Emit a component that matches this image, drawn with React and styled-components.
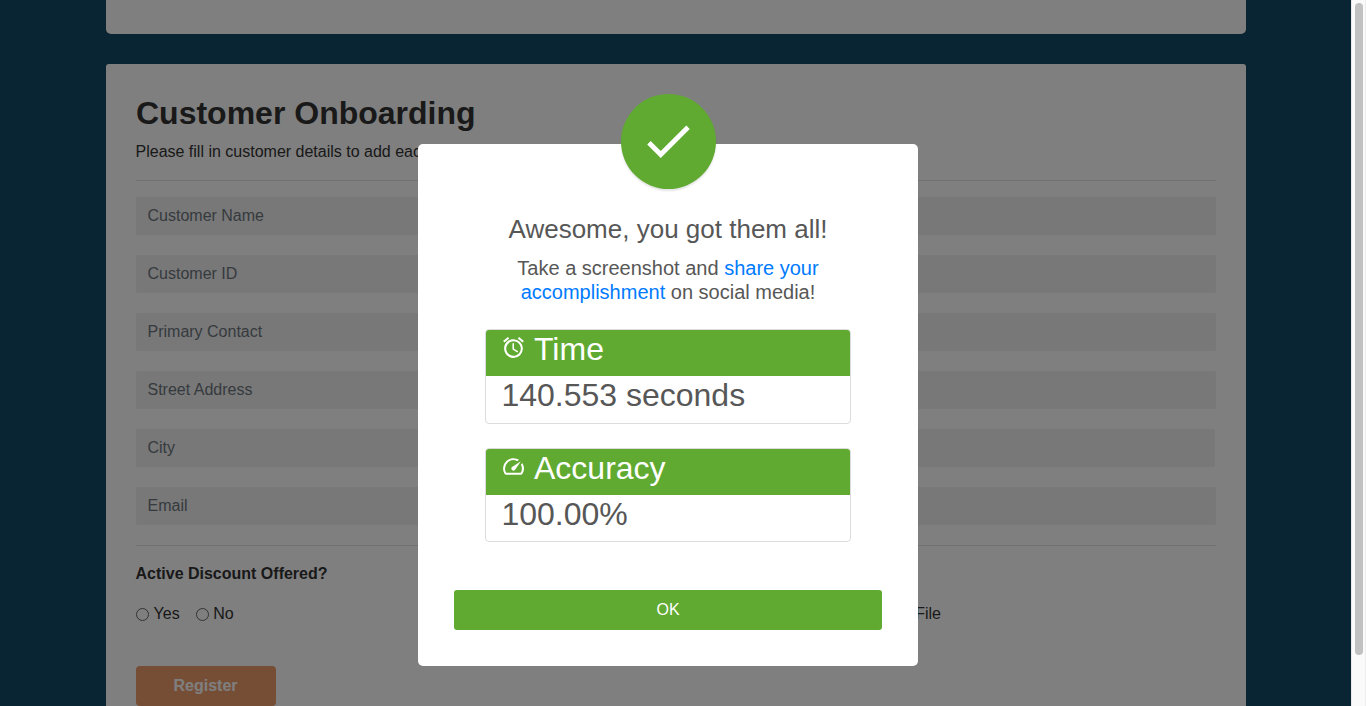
import React from "react";
import styled, { createGlobalStyle } from "styled-components";
import { MdCheck, MdAlarm, MdSpeed } from "react-icons/md";

const GlobalStyle = createGlobalStyle`
  * { box-sizing: border-box; }
  body {
    margin: 0;
    overflow: hidden;
    font-family: "Liberation Sans", Arial, sans-serif;
    font-size: 16px;
    line-height: 24px;
    color: #333;
  }
`;

const Page = styled.div`
  display: flex;
  height: 706px;
  overflow: hidden;
  background: #124a66;
`;

const Content = styled.main`
  flex: 1;
  display: flex;
  flex-direction: column;
  align-items: center;
  gap: 30px;
`;

const Card = styled.section`
  width: 1140px;
  flex: none;
  margin-left: 1px;
  background: #fff;
  border-radius: ${(p) => (p.$end ? "0 0 5px 5px" : "3px")};
  height: ${(p) => p.$height}px;
  padding: ${(p) => (p.$end ? 0 : "30px")};
`;

const Heading = styled.h1`
  margin: 0 0 8px;
  font-size: 32px;
  line-height: 38.4px;
  font-weight: 700;
`;

const Lead = styled.p`
  margin: 0 0 16px;
  white-space: nowrap;
  text-indent: -0.5px;
`;

const Rule = styled.hr`
  height: 1px;
  margin: 0 0 16px;
  border: 0;
  background: #e3e3e3;
`;

const Fields = styled.div`
  display: grid;
  gap: 20px;
  margin-bottom: 20px;
`;

const Field = styled.input`
  width: ${(p) => (p.$short ? "1079px" : "100%")};
  height: 38px;
  padding: 6px 11.5px;
  border: 0;
  border-radius: 2px;
  background: #f0f0f0;
  font: inherit;
  &::placeholder { color: #6c757d; opacity: 1; }
`;

const Options = styled.div`
  display: grid;
  grid-template-columns: 702px 1fr;
  height: 104px;
`;

const OptionTitle = styled.div`
  margin-bottom: 16px;
  font-weight: 700;
  text-indent: -0.5px;
`;

const Choices = styled.div`
  display: flex;
  gap: 16px;
`;

const Choice = styled.label`
  display: flex;
  align-items: center;
  gap: 4.6px;
`;

const Ring = styled.span`
  width: 13px;
  height: 13px;
  margin-top: 1px;
  border: 1px solid #666;
  border-radius: ${(p) => (p.$square ? "2px" : "50%")};
`;

const Register = styled.button`
  width: 140px;
  height: 40px;
  padding: 0 1px 0 0;
  border: 0;
  border-radius: 4px;
  background: #ec9c6c;
  color: #fff;
  font: inherit;
  font-weight: 700;
`;

const Scrollbar = styled.div`
  position: relative;
  z-index: 2;
  width: 15px;
  padding: 3px 2px 0 3px;
  background: #fafafa;
  border-left: 1px solid #e8e8e8;
  border-right: 1px solid #ededed;
`;

const Thumb = styled.div`
  width: 8px;
  height: 652px;
  border-radius: 4px;
  background: #c1c1c1;
`;

const Overlay = styled.div`
  position: fixed;
  inset: 0 15px 0 0;
  z-index: 1;
  display: flex;
  justify-content: center;
  align-items: flex-start;
  padding: 144px 15px 0 0;
  background: rgba(0, 0, 0, 0.5);
`;

const Dialog = styled.div`
  position: relative;
  width: 500px;
  height: 522px;
  padding: 70px 36px 36px;
  display: flex;
  flex-direction: column;
  border-radius: 5px;
  background: #fff;
  color: #575757;
`;

const Badge = styled.div`
  position: absolute;
  top: -50px;
  left: 203px;
  width: 95px;
  height: 95px;
  padding: 0 1px 1px 0;
  display: flex;
  align-items: center;
  justify-content: center;
  border-radius: 50%;
  background: #60aa31;
  color: #fff;
  box-shadow: 0 2px 2px rgba(0, 0, 0, 0.1);
  svg { display: block; }
`;

const Title = styled.h4`
  margin: 0 0 11px;
  font-size: 26px;
  line-height: 31px;
  font-weight: 400;
  text-align: center;
`;

const Message = styled.p`
  margin: 0 0 25px;
  font-size: 20px;
  line-height: 24px;
  text-align: center;
`;

const Link = styled.a`
  color: #007bff;
`;

const Stat = styled.div`
  width: 366px;
  height: ${(p) => p.$height}px;
  margin: 0 31px 24px;
  overflow: hidden;
  border: 1px solid #dcdcdc;
  border-radius: 4px;
  font-size: 32px;
  line-height: 38.4px;
`;

const StatHead = styled.div`
  display: flex;
  height: 46px;
  padding-left: 15px;
  gap: 8px;
  background: #60aa31;
  color: #fff;
  svg { margin-top: 5px; }
`;

const StatValue = styled.div`
  padding-left: 15.4px;
`;

const Ok = styled.button`
  width: 428px;
  height: 40px;
  margin-top: auto;
  border: 0;
  border-radius: 3px;
  background: #60aa31;
  color: #fff;
  font: inherit;
`;

const fields = ["Customer Name", "Customer ID", "Primary Contact", "Street Address", "City", "Email"];

export default function App() {
  return (
    <>
      <GlobalStyle />
      <Page>
        <Content>
          <Card $end $height={34} />
          <Card $height={720}>
            <Heading>Customer Onboarding</Heading>
            <Lead>Please fill in customer details to add each</Lead>
            <Rule />
            <Fields>
              {fields.map((name) => (
                <Field key={name} placeholder={name} $short={name === "City"} />
              ))}
            </Fields>
            <Rule />
            <Options>
              <div>
                <OptionTitle>Active Discount Offered?</OptionTitle>
                <Choices>
                  <Choice><Ring />Yes</Choice>
                  <Choice><Ring />No</Choice>
                </Choices>
              </div>
              <div>
                <OptionTitle>&nbsp;</OptionTitle>
                <Choice><Ring $square />NDA on File</Choice>
              </div>
            </Options>
            <Register>Register</Register>
          </Card>
        </Content>
        <Scrollbar><Thumb /></Scrollbar>
      </Page>
      <Overlay>
        <Dialog>
          <Badge><MdCheck size={58} /></Badge>
          <Title>Awesome, you got them all!</Title>
          <Message>
            Take a screenshot and <Link>share your<br />accomplishment</Link> on social media!
          </Message>
          <Stat $height={95}>
            <StatHead><MdAlarm size={25} />Time</StatHead>
            <StatValue>140.553 seconds</StatValue>
          </Stat>
          <Stat $height={94}>
            <StatHead><MdSpeed size={25} />Accuracy</StatHead>
            <StatValue>100.00%</StatValue>
          </Stat>
          <Ok>OK</Ok>
        </Dialog>
      </Overlay>
    </>
  );
}
